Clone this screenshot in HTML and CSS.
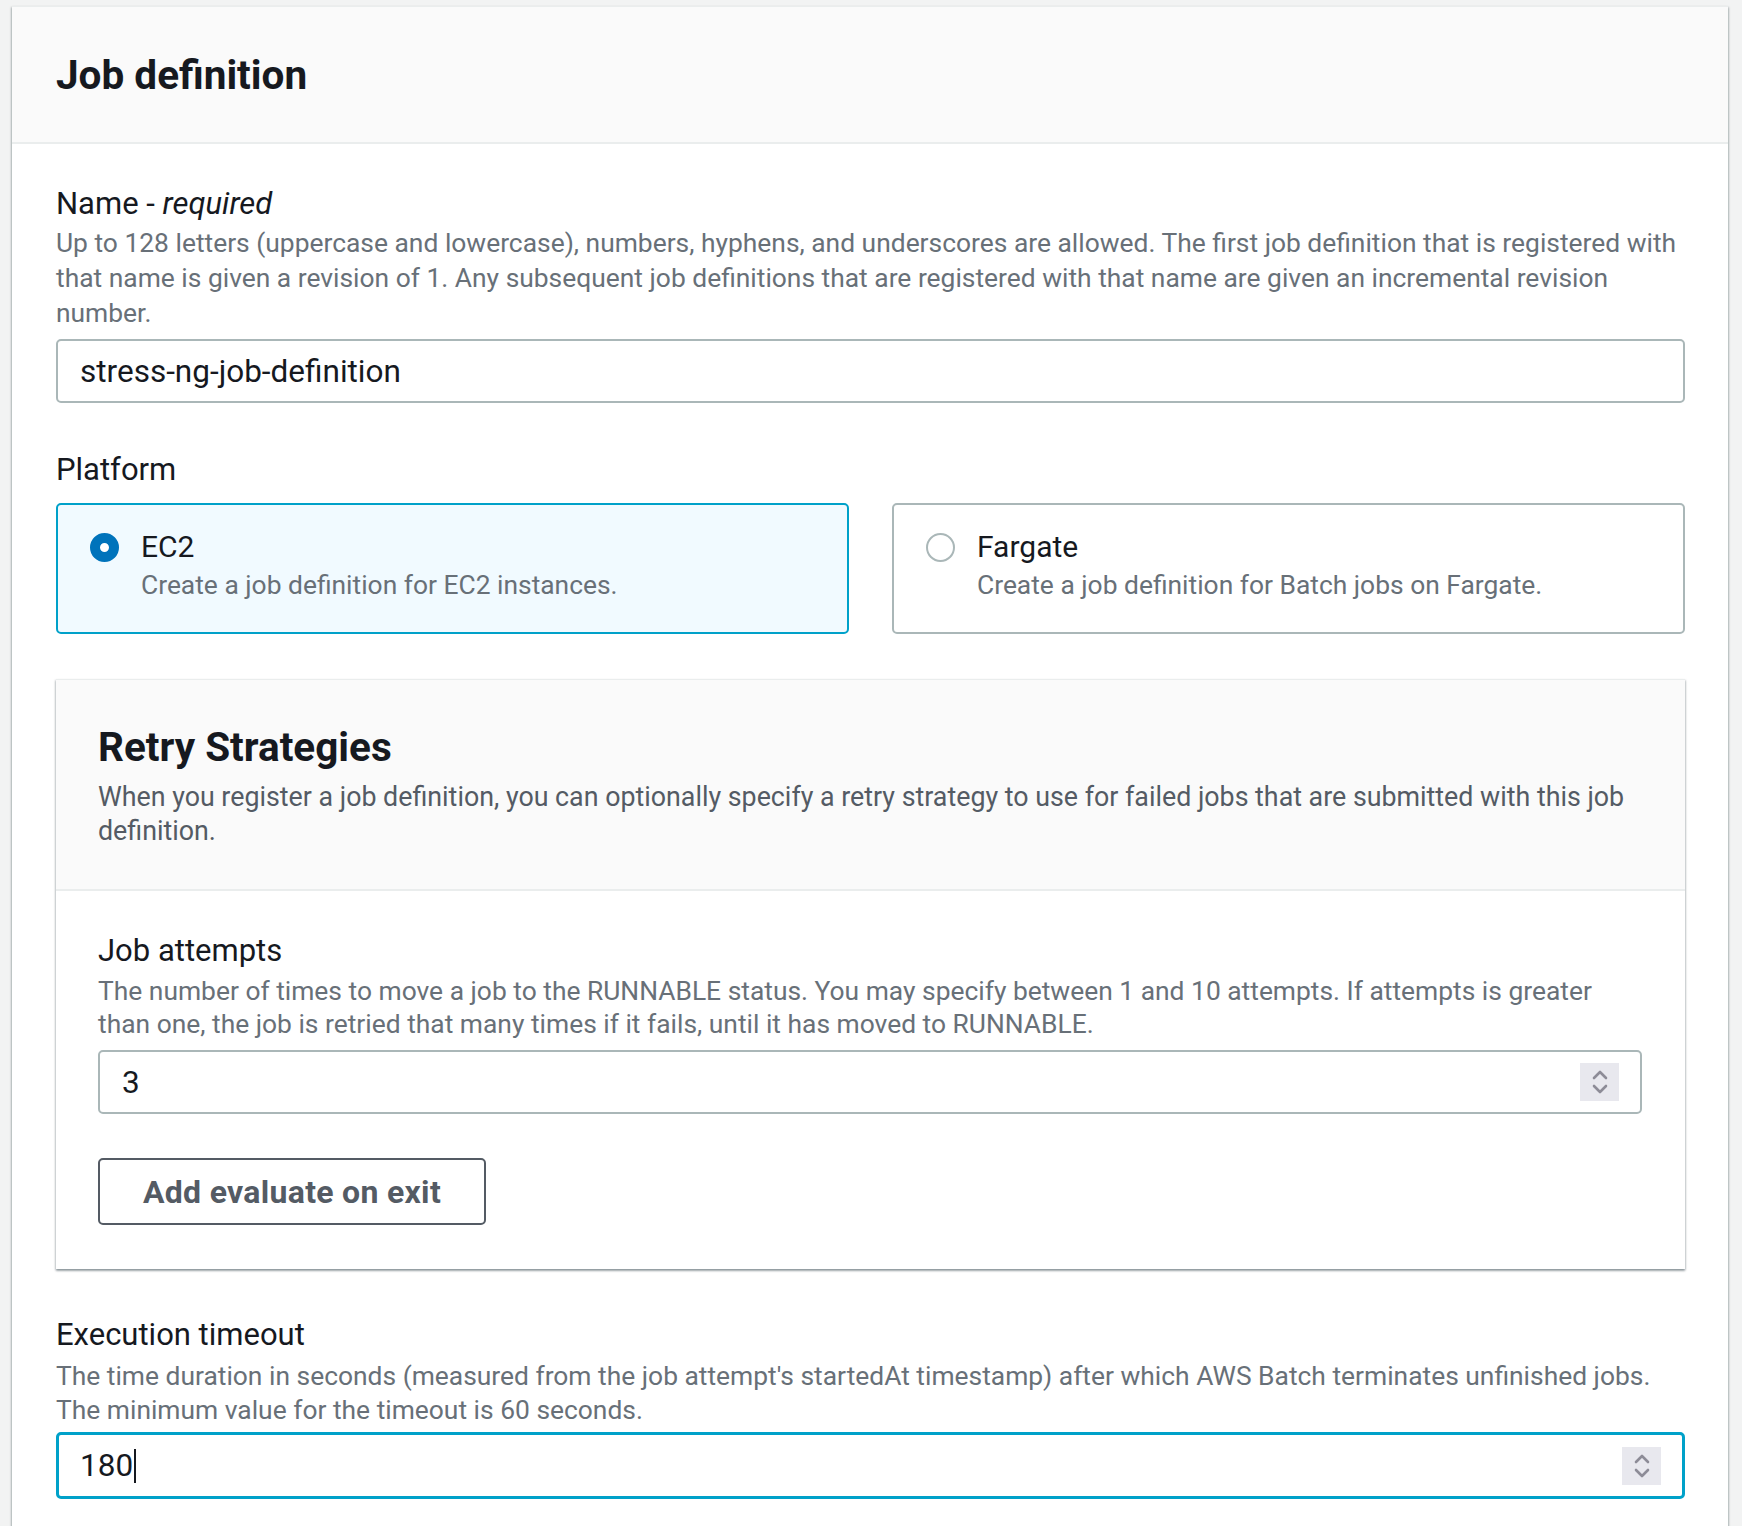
FILE: index.html
```html
<!DOCTYPE html>
<html lang="en">
<head>
<meta charset="utf-8">
<title>Job definition</title>
<link rel="stylesheet" href="styles.css">
</head>
<body>
<div class="page">
  <section class="panel">
    <header class="panel-header">
      <h2 class="panel-title">Job definition</h2>
    </header>
    <div class="panel-body">
      <div class="field">
        <div class="label">Name - <i>required</i></div>
        <div class="desc">Up to 128 letters (uppercase and lowercase), numbers, hyphens, and underscores are allowed. The first job definition that is registered with that name is given a revision of 1. Any subsequent job definitions that are registered with that name are given an incremental revision number.</div>
        <div class="input"><span class="value">stress-ng-job-definition</span></div>
      </div>

      <div class="field field-platform">
        <div class="label">Platform</div>
        <div class="tiles">
          <div class="tile tile-selected">
            <span class="radio radio-on"></span>
            <div class="tile-text">
              <div class="tile-title">EC2</div>
              <div class="tile-desc">Create a job definition for EC2 instances.</div>
            </div>
          </div>
          <div class="tile">
            <span class="radio"></span>
            <div class="tile-text">
              <div class="tile-title">Fargate</div>
              <div class="tile-desc">Create a job definition for Batch jobs on Fargate.</div>
            </div>
          </div>
        </div>
      </div>

      <section class="sub">
        <header class="sub-header">
          <h3 class="sub-title">Retry Strategies</h3>
          <div class="sub-desc">When you register a job definition, you can optionally specify a retry strategy to use for failed jobs that are submitted with this job definition.</div>
        </header>
        <div class="sub-body">
          <div class="label">Job attempts</div>
          <div class="desc desc-tight">The number of times to move a job to the RUNNABLE status. You may specify between 1 and 10 attempts. If attempts is greater than one, the job is retried that many times if it fails, until it has moved to RUNNABLE.</div>
          <div class="input input-number">
            <span class="value">3</span>
            <span class="spin">
              <svg width="18" height="30" viewBox="0 0 18 30"><path d="M3 11 L9 5 L15 11 M3 19 L9 25 L15 19" fill="none" stroke="#8d8c97" stroke-width="2.6" stroke-linecap="round" stroke-linejoin="round"/></svg>
            </span>
          </div>
          <button class="btn" type="button">Add evaluate on exit</button>
        </div>
      </section>

      <div class="field field-timeout">
        <div class="label">Execution timeout</div>
        <div class="desc desc-timeout">The time duration in seconds (measured from the job attempt's startedAt timestamp) after which AWS Batch terminates unfinished jobs. The minimum value for the timeout is 60 seconds.</div>
        <div class="input input-number input-focus">
          <span class="value">180<span class="caret"></span></span>
          <span class="spin">
            <svg width="18" height="30" viewBox="0 0 18 30"><path d="M3 11 L9 5 L15 11 M3 19 L9 25 L15 19" fill="none" stroke="#8d8c97" stroke-width="2.6" stroke-linecap="round" stroke-linejoin="round"/></svg>
          </span>
        </div>
      </div>
    </div>
  </section>
</div>
</body>
</html>
```
FILE: styles.css
```css
html, body {
  margin: 0;
  padding: 0;
}
body {
  background: #f2f3f3;
  font-family: Roboto, "Noto Sans", Arial, sans-serif;
  color: #16191f;
  font-size: 26.4px;
  line-height: 35px;
}
.page {
  padding: 6px 14px 0 12px;
}
.panel {
  background: #ffffff;
  border-top: 1px solid #eaeded;
  box-shadow: 0 2px 2px 0 rgba(0,28,36,.25), 1px 1px 2px 0 rgba(0,28,36,.2), -1px 1px 2px 0 rgba(0,28,36,.2);
  min-height: 1540px;
}
.panel-header {
  background: #fafafa;
  border-bottom: 2px solid #eaeded;
  height: 135px;
  display: flex;
  align-items: center;
  padding: 0 44px;
}
.panel-title {
  margin: 0;
  font-size: 40.5px;
  line-height: 48px;
  font-weight: 700;
  padding-top: 0;
  color: #16191f;
}
.panel-body {
  padding: 42px 43px 0 44px;
}
.label {
  font-size: 31px;
  line-height: 36px;
  color: #16191f;
}
.label i {
  font-style: italic;
}
.desc {
  margin-top: 4px;
  font-size: 26.4px;
  line-height: 35px;
  color: #687078;
}
.desc-tight {
  margin-top: 6px;
  line-height: 33px;
}
.desc-timeout {
  margin-top: 6px;
  line-height: 34px;
}
.input {
  margin-top: 8px;
  height: 64px;
  box-sizing: border-box;
  border: 2px solid #aab7b8;
  border-radius: 5px;
  display: flex;
  align-items: center;
  padding: 0 21px 0 22px;
  font-size: 31.5px;
  background: #fff;
}
.value {
  flex: 1;
  color: #16191f;
  display: flex;
  align-items: center;
}
.caret {
  display: inline-block;
  width: 2px;
  height: 34px;
  background: #16191f;
  margin-left: 1px;
}
.spin {
  width: 39px;
  height: 38px;
  background: #e8e8ee;
  display: flex;
  align-items: center;
  justify-content: center;
}
.field-platform {
  margin-top: 49px;
}
.tiles {
  margin-top: 15px;
  display: grid;
  grid-template-columns: 1fr 1fr;
  column-gap: 43px;
}
.tile {
  height: 131px;
  box-sizing: border-box;
  border: 2px solid #aab7b8;
  border-radius: 5px;
  display: flex;
  align-items: flex-start;
  padding: 24px 20px 0 32px;
  background: #fff;
}
.tile-selected {
  border-color: #00a1c9;
  background: #f1faff;
}
.radio {
  flex: none;
  width: 29px;
  height: 29px;
  box-sizing: border-box;
  border-radius: 50%;
  border: 2px solid #aab7b8;
  margin-top: 4px;
  background: #fff;
}
.radio-on {
  border: 10px solid #0073bb;
  background: #fff;
}
.tile-text {
  margin-left: 22px;
}
.tile-title {
  font-size: 30px;
  line-height: 36px;
  color: #16191f;
}
.tile-desc {
  margin-top: 3px;
  font-size: 26.4px;
  line-height: 34px;
  color: #687078;
}
.sub {
  margin-top: 45px;
  border-top: 1px solid #eaeded;
  box-shadow: 0 2px 2px 0 rgba(0,28,36,.3), 1px 1px 2px 0 rgba(0,28,36,.15), -1px 1px 2px 0 rgba(0,28,36,.15);
  background: #fff;
}
.sub-header {
  background: #fafafa;
  border-bottom: 2px solid #eaeded;
  padding: 43px 42px 41px 42px;
}
.sub-title {
  margin: 0;
  font-size: 40.5px;
  line-height: 48px;
  font-weight: 700;
  color: #16191f;
}
.sub-desc {
  margin-top: 9px;
  font-size: 26.8px;
  line-height: 34px;
  color: #545b64;
}
.sub-body {
  padding: 42px 43px 44px 42px;
}
.sub-body .input {
  margin-top: 9px;
}
.btn {
  margin-top: 44px;
  height: 67px;
  width: 388px;
  box-sizing: border-box;
  border: 2px solid #545b64;
  border-radius: 5px;
  background: #fff;
  color: #545b64;
  font-family: inherit;
  font-size: 32px;
  font-weight: 700;
  letter-spacing: 0.3px;
  padding: 0;
  display: block;
}
.field-timeout {
  margin-top: 48px;
}
.input-focus {
  height: 67px;
  border: 3px solid #00a1c9;
  padding: 0 21px 0 21px;
  margin-top: 5px;
}
```
